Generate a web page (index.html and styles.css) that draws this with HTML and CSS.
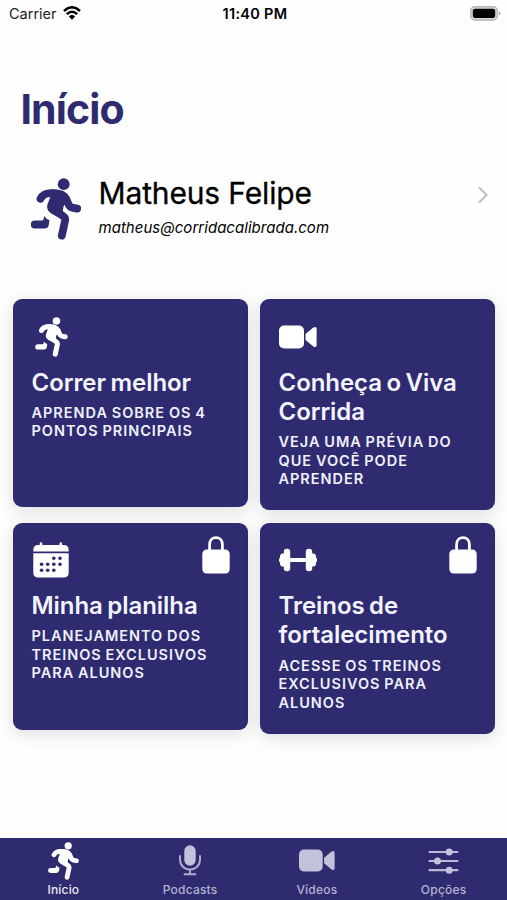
FILE: index.html
```html
<!DOCTYPE html>
<html lang="pt-BR">
<head>
    <meta charset="UTF-8">
    <meta name="viewport" content="width=device-width, initial-scale=1.0">
    <title>Início</title>
    <link rel="stylesheet" href="styles.css">
</head>
<body>
    <!-- Shared icons -->
    <svg class="sprite" aria-hidden="true">
        <symbol id="runner" viewBox="0 0 50 62">
            <circle cx="32.7" cy="6.2" r="5.9" fill="currentColor"/>
            <path d="M17 11.8C23 10.6 31 12.3 36 16L38.5 20L32.5 28.5L31.5 34.5L35 37L31 41L22 36.5C16 33 15.2 29 17 25L19.5 18.5L14 18Z" fill="currentColor"/>
            <path d="M9.5 20.8C12 15.8 16 15.2 20 15.2C27 14.8 32.5 16 35 20.5L37.5 26Q38.5 28.9 41 29.6L46.2 30.6M21 30.5L32 38Q34.8 39.8 34 43L30.8 57.6" fill="none" stroke="currentColor" stroke-width="7.8" stroke-linecap="round" stroke-linejoin="round"/>
            <path d="M3.8 42.4H11.5Q12.7 42.2 13.2 38Q15 41 18.4 42L17.8 47Q17 50.5 13.4 50.5H3.8A4 4 0 0 1 3.8 42.4Z" fill="currentColor"/>
        </symbol>
        <symbol id="video" viewBox="0 0 38 24">
            <rect x="0" y="0.5" width="25" height="23" rx="5" fill="currentColor"/>
            <path d="M26.5 9L34 2.8Q37.6 0.5 37.6 4V20Q37.6 23.5 34 21.2L26.5 15Z" fill="currentColor"/>
        </symbol>
        <symbol id="lock" viewBox="0 0 28 38">
            <path d="M7.6 15V8.5C7.6 -0.6 20.4 -0.6 20.4 8.5V15" fill="none" stroke="currentColor" stroke-width="2.8"/>
            <rect x="0.3" y="13.5" width="27.4" height="24" rx="4.5" fill="currentColor"/>
        </symbol>
    </svg>

    <div class="app">
        <!-- Status bar -->
        <div class="status-bar">
            <div class="carrier">
                <span>Carrier</span>
                <svg class="wifi" viewBox="0 0 18 14">
                    <path d="M1 5Q9 -2.4 17 5M3.8 8.2Q9 3.4 14.2 8.2" fill="none" stroke="#000" stroke-width="2.5"/>
                    <path d="M5.8 10.5Q9 7.7 12.2 10.5L9 13.8Z" fill="#000"/>
                </svg>
            </div>
            <div class="time">11:40 PM</div>
            <svg class="battery" viewBox="0 0 31 15">
                <rect x="0.8" y="0.8" width="26.4" height="13.2" rx="4" fill="#ddd" stroke="#b4b4b4" stroke-width="1.4"/>
                <rect x="2.8" y="2.8" width="22.4" height="9.2" rx="2" fill="#000"/>
                <path d="M28.8 5.2Q30.6 5.8 30.6 7.4T28.8 9.6Z" fill="#aaa"/>
            </svg>
        </div>

        <h1>Início</h1>

        <!-- Profile -->
        <div class="profile">
            <svg class="avatar"><use href="#runner"/></svg>
            <div class="profile-info">
                <div class="name">Matheus Felipe</div>
                <div class="email">matheus@corridacalibrada.com</div>
            </div>
            <svg class="chevron" viewBox="0 0 10 18">
                <path d="M1 1.5L8.6 9L1 16.5" fill="none" stroke="#bfbfc1" stroke-width="2.1"/>
            </svg>
        </div>

        <!-- Cards -->
        <div class="cards">
            <div class="card">
                <div class="card-icon"><svg class="icon-runner"><use href="#runner"/></svg></div>
                <h2>Correr melhor</h2>
                <p>APRENDA SOBRE OS 4<br>PONTOS PRINCIPAIS</p>
            </div>
            <div class="card">
                <div class="card-icon"><svg class="icon-video"><use href="#video"/></svg></div>
                <h2>Conheça o Viva<br>Corrida</h2>
                <p>VEJA UMA PRÉVIA DO<br>QUE VOCÊ PODE<br>APRENDER</p>
            </div>
            <div class="card">
                <svg class="lock"><use href="#lock"/></svg>
                <div class="card-icon">
                    <svg class="icon-calendar" viewBox="0 0 36 36">
                        <path d="M0.3 9.5V8Q0.3 3 5.3 3H6.7V1.5Q6.7 0.3 8 0.3T9.3 1.5V3H26.5V1.5Q26.5 0.3 27.8 0.3T29.1 1.5V3H30.7Q35.7 3 35.7 8V9.5Z" fill="#fff"/>
                        <path d="M0.3 11.3H35.7V30.5Q35.7 35.5 30.7 35.5H5.3Q0.3 35.5 0.3 30.5Z" fill="#fff"/>
                        <g fill="#2e2b70">
                            <circle cx="20.8" cy="16.2" r="1.8"/><circle cx="27" cy="16.2" r="1.8"/>
                            <circle cx="8.6" cy="22.2" r="1.8"/><circle cx="14.7" cy="22.2" r="1.8"/><circle cx="20.8" cy="22.2" r="1.8"/><circle cx="27" cy="22.2" r="1.8"/>
                            <circle cx="8.6" cy="28.2" r="1.8"/><circle cx="14.7" cy="28.2" r="1.8"/><circle cx="20.8" cy="28.2" r="1.8"/>
                        </g>
                    </svg>
                </div>
                <h2>Minha planilha</h2>
                <p>PLANEJAMENTO DOS<br>TREINOS EXCLUSIVOS<br>PARA ALUNOS</p>
            </div>
            <div class="card">
                <svg class="lock"><use href="#lock"/></svg>
                <div class="card-icon">
                    <svg class="icon-dumbbell" viewBox="0 0 38 24" fill="#fff">
                        <rect x="9" y="10" width="20" height="4"/>
                        <rect x="4.8" y="0.8" width="6.4" height="22.4" rx="3"/>
                        <rect x="26.8" y="0.8" width="6.4" height="22.4" rx="3"/>
                        <path d="M6 5.5H3.5Q1.2 5.5 1 8V9.5Q0 10 0 12T1 14.5V16Q1.2 18.5 3.5 18.5H6ZM32 5.5H34.5Q36.8 5.5 37 8V9.5Q38 10 38 12T37 14.5V16Q36.8 18.5 34.5 18.5H32Z"/>
                    </svg>
                </div>
                <h2>Treinos de<br>fortalecimento</h2>
                <p>ACESSE OS TREINOS<br>EXCLUSIVOS PARA<br>ALUNOS</p>
            </div>
        </div>

        <!-- Tab bar -->
        <div class="tab-bar">
            <div class="tab active">
                <div class="tab-icon"><svg class="tab-runner"><use href="#runner"/></svg></div>
                <span>Início</span>
            </div>
            <div class="tab">
                <div class="tab-icon">
                    <svg class="tab-mic" viewBox="0 0 22 31">
                        <rect x="5.3" y="0.3" width="11.4" height="20.4" rx="5.7" fill="#c3c2db"/>
                        <path d="M1 11V14.5C1 27.8 21 27.8 21 14.5V11M11 24.5V29M5.5 29.2H16.5" fill="none" stroke="#b1afcf" stroke-width="1.9" stroke-linecap="round"/>
                    </svg>
                </div>
                <span>Podcasts</span>
            </div>
            <div class="tab">
                <div class="tab-icon"><svg class="tab-video"><use href="#video"/></svg></div>
                <span>Vídeos</span>
            </div>
            <div class="tab">
                <div class="tab-icon">
                    <svg class="tab-sliders" viewBox="0 0 30 26">
                        <path d="M1 4H29M1 13H29M1 22.2H29" stroke="#bbb9d6" stroke-width="2.2" stroke-linecap="round"/>
                        <g fill="#c3c2db"><circle cx="20.7" cy="4" r="3.5"/><circle cx="9" cy="13" r="3.5"/><circle cx="20.7" cy="22.2" r="3.5"/></g>
                    </svg>
                </div>
                <span>Opções</span>
            </div>
        </div>
    </div>
</body>
</html>
```
FILE: styles.css
```css
* {
    margin: 0;
    padding: 0;
    box-sizing: border-box;
}

body {
    font-family: Inter, "Liberation Sans", sans-serif;
    background-color: #fefefe;
    color: #000;
}

svg {
    display: block;
    flex-shrink: 0;
}

.sprite {
    display: none;
}

.app {
    display: flex;
    flex-direction: column;
    height: 900px;
    overflow: hidden;
}

.status-bar {
    display: grid;
    grid-template-columns: 1fr auto 1fr;
    align-items: center;
    height: 27px;
    padding: 0 6px 0 9px;
    font-size: 14.5px;
}

.carrier {
    display: flex;
    align-items: center;
    gap: 6px;
    color: #222;
}

.wifi {
    width: 18px;
    height: 14px;
    margin-top: -1px;
}

.time {
    font-weight: 600;
    letter-spacing: 0.3px;
}

.battery {
    width: 31px;
    height: 15px;
    margin-top: -1px;
    justify-self: end;
}

h1 {
    margin-top: 57px;
    padding-left: 20.5px;
    font-size: 41px;
    line-height: 50px;
    font-weight: 700;
    letter-spacing: -0.9px;
    color: #2e2b70;
}

.profile {
    display: flex;
    align-items: flex-start;
    height: 62px;
    margin-top: 43.5px;
    padding: 0 19.5px 0 31px;
}

.avatar {
    width: 50px;
    height: 62px;
    color: #2e2b70;
}

.profile-info {
    flex: 1;
    padding-left: 17.5px;
}

.name {
    margin-top: -3px;
    font-size: 30px;
    line-height: 36px;
    letter-spacing: -0.15px;
    -webkit-text-stroke: 0.3px #000;
}

.email {
    margin-top: 7px;
    font-size: 15px;
    line-height: 20px;
    font-style: italic;
    letter-spacing: 0.03px;
}

.chevron {
    width: 10px;
    height: 18px;
    margin-top: 8.5px;
}

.cards {
    display: grid;
    grid-template-columns: 235px 235px;
    column-gap: 12px;
    row-gap: 12.5px;
    align-items: start;
    margin-top: 59.5px;
    padding-left: 13px;
}

.card {
    position: relative;
    min-height: 207.5px;
    padding: 17px 18.5px 21.5px;
    border-radius: 9px;
    background-color: #2e2b70;
    color: #fff;
    box-shadow: 0 4px 18px rgba(0, 0, 0, 0.13);
}

.card-icon {
    display: flex;
    align-items: center;
    height: 41px;
}

.icon-runner {
    width: 33px;
    height: 40px;
    margin-left: 3px;
}

.icon-video,
.icon-dumbbell {
    width: 38px;
    height: 24px;
}

.icon-calendar {
    width: 36px;
    height: 36px;
    margin-left: 1.5px;
}

.lock {
    position: absolute;
    top: 13px;
    right: 18px;
    width: 28px;
    height: 38px;
}

.card h2 {
    margin-top: 10.5px;
    font-size: 24px;
    line-height: 29.3px;
    font-weight: 600;
    letter-spacing: -0.05px;
    word-spacing: -1.5px;
    white-space: nowrap;
    color: #f4f4ff;
}

.card p {
    margin-top: 7px;
    font-size: 14.5px;
    line-height: 18.5px;
    font-weight: 600;
    letter-spacing: 0.98px;
    word-spacing: -0.8px;
    white-space: nowrap;
    color: #f0f0fc;
}

.tab-bar {
    display: grid;
    grid-template-columns: repeat(4, 1fr);
    height: 62px;
    margin-top: auto;
    background-color: #2e2b70;
}

.tab {
    display: flex;
    flex-direction: column;
    align-items: center;
    color: #c3c2db;
}

.tab.active {
    color: #fff;
}

.tab-icon {
    display: flex;
    align-items: center;
    height: 45px;
}

.tab span {
    font-size: 12px;
    line-height: 14px;
    font-weight: 500;
    letter-spacing: 0.2px;
    opacity: 0.9;
}

.tab-runner {
    width: 31px;
    height: 38px;
}

.tab-mic {
    width: 22px;
    height: 31px;
}

.tab-video {
    width: 36px;
    height: 23px;
}

.tab-sliders {
    width: 31px;
    height: 26px;
}
```
